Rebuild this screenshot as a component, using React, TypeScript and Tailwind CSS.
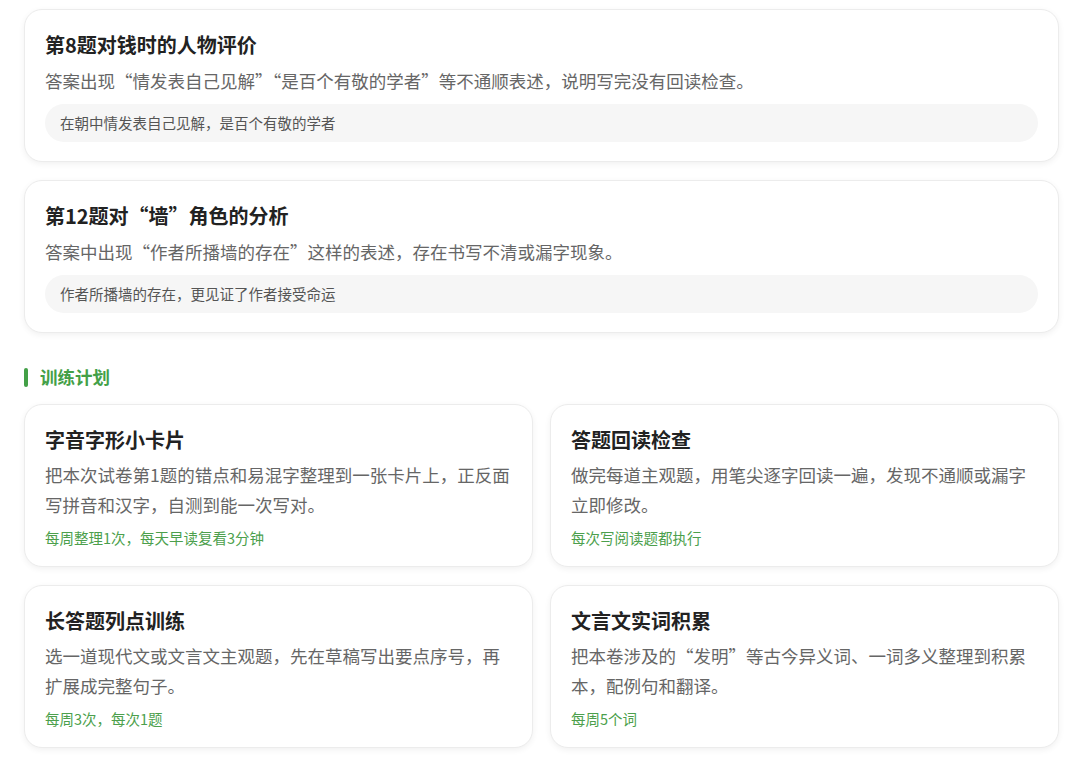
import React from 'react';

const issues = [
  {
    title: '第8题对钱时的人物评价',
    desc: '答案出现“情发表自己见解”“是百个有敬的学者”等不通顺表述，说明写完没有回读检查。',
    quote: '在朝中情发表自己见解，是百个有敬的学者',
  },
  {
    title: '第12题对“墙”角色的分析',
    desc: '答案中出现“作者所播墙的存在”这样的表述，存在书写不清或漏字现象。',
    quote: '作者所播墙的存在，更见证了作者接受命运',
  },
];

const plans = [
  {
    title: '字音字形小卡片',
    desc: '把本次试卷第1题的错点和易混字整理到一张卡片上，正反面写拼音和汉字，自测到能一次写对。',
    freq: '每周整理1次，每天早读复看3分钟',
  },
  {
    title: '答题回读检查',
    desc: '做完每道主观题，用笔尖逐字回读一遍，发现不通顺或漏字立即修改。',
    freq: '每次写阅读题都执行',
  },
  {
    title: '长答题列点训练',
    desc: '选一道现代文或文言文主观题，先在草稿写出要点序号，再扩展成完整句子。',
    freq: '每周3次，每次1题',
  },
  {
    title: '文言文实词积累',
    desc: '把本卷涉及的“发明”等古今异义词、一词多义整理到积累本，配例句和翻译。',
    freq: '每周5个词',
  },
];

const cardCls =
  'bg-white border border-[#ececec] rounded-[18px] shadow-[0_2px_6px_rgba(0,0,0,0.06)]';

export default function App() {
  return (
    <div
      className="min-h-screen bg-white pl-6 pr-[21px] pt-[9px] pb-6"
      style={{ fontFamily: '"Noto Sans CJK SC", "Noto Sans", sans-serif' }}
    >
      <div className="flex flex-col gap-[18px]">
        {issues.map((it) => (
          <div key={it.title} className={`${cardCls} px-5 pt-[21px] pb-[19px]`}>
            <div className="text-[20px] leading-[27px] font-bold text-[#222]">{it.title}</div>
            <div className="mt-2 text-[17.5px] leading-[30px] text-[#666]">{it.desc}</div>
            <div className="mt-2 h-[38px] flex items-center rounded-full bg-[#f6f6f6] px-[15px] text-[14.5px] text-[#555]">
              {it.quote}
            </div>
          </div>
        ))}
      </div>

      <div className="mt-[34px] mb-[17px] flex items-center gap-3 h-5">
        <div className="w-1 h-[19px] rounded-sm bg-[#43a047]" />
        <div className="text-[17.5px] font-bold text-[#43a047]">训练计划</div>
      </div>

      <div className="grid grid-cols-2 gap-x-[17px] gap-y-[18px]">
        {plans.map((p) => (
          <div key={p.title} className={`${cardCls} px-5 pt-[21px] pb-[18px]`}>
            <div className="text-[20px] leading-[27px] font-bold text-[#222]">{p.title}</div>
            <div className="mt-[7px] text-[17.5px] leading-[30px] text-[#666]">{p.desc}</div>
            <div className="mt-2 text-[14.5px] leading-[20px] text-[#4c9f4c]">{p.freq}</div>
          </div>
        ))}
      </div>
    </div>
  );
}
